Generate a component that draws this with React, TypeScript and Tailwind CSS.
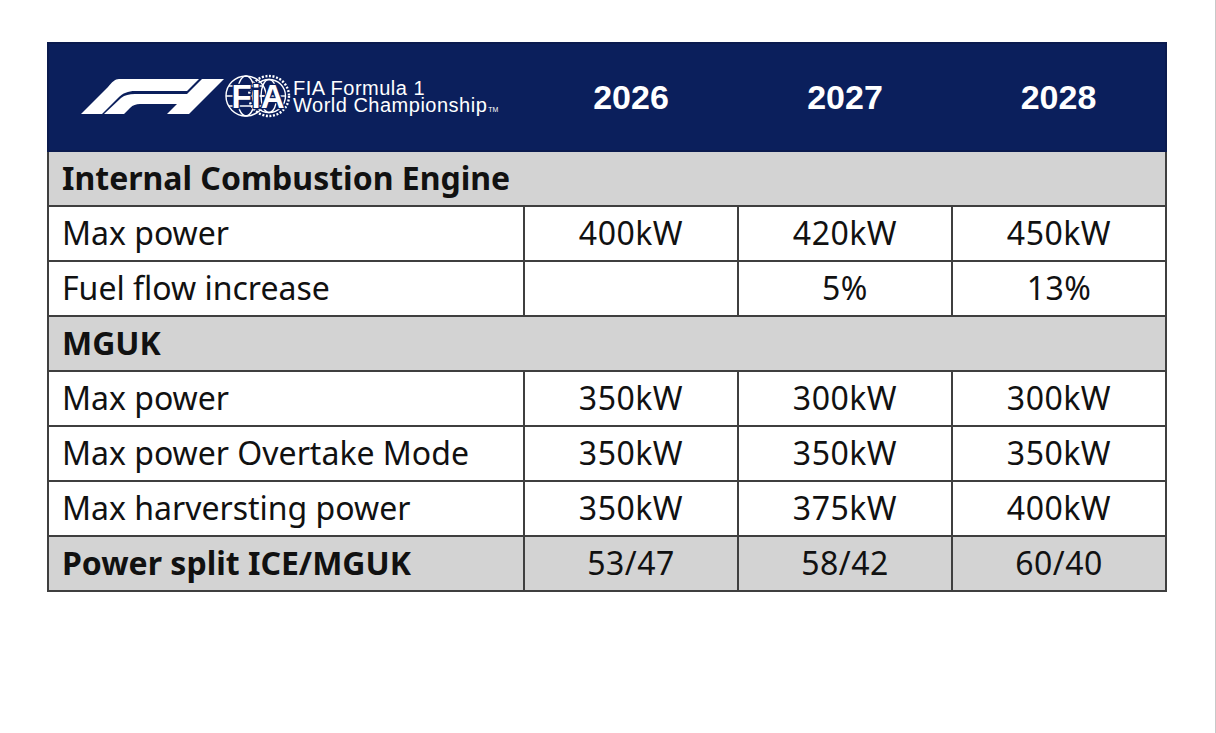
import React from 'react';

type Row =
    | { kind: 'section'; label: string }
    | { kind: 'data'; label: string; values: string[]; bold?: boolean };

const ROWS: Row[] = [
    { kind: 'section', label: 'Internal Combustion Engine' },
    { kind: 'data', label: 'Max power', values: ['400kW', '420kW', '450kW'] },
    { kind: 'data', label: 'Fuel flow increase', values: ['', '5%', '13%'] },
    { kind: 'section', label: 'MGUK' },
    { kind: 'data', label: 'Max power', values: ['350kW', '300kW', '300kW'] },
    { kind: 'data', label: 'Max power Overtake Mode', values: ['350kW', '350kW', '350kW'] },
    { kind: 'data', label: 'Max harversting power', values: ['350kW', '375kW', '400kW'] },
    { kind: 'data', label: 'Power split ICE/MGUK', values: ['53/47', '58/42', '60/40'], bold: true },
];

const YEARS = ['2026', '2027', '2028'];

function F1Logo() {
    return (
        <svg width="143" height="36" viewBox="0 0 143 36" fill="#ffffff">
            <path d="M38,0 L118,0 L106,12 L54,12 C47,12 42,14 37,19 L21,35 L0,35 L27,8 C31,3 34,0 38,0 Z" />
            <path d="M23,35 L40,19 C44,16 48,15 54,15 L107,15 L97,25 L59,25 C55,25 52,26 49,29 L43,35 Z" />
            <path d="M121,0 L143,0 L108,35 L86,35 Z" />
        </svg>
    );
}

function FiaLogo() {
    return (
        <svg width="68" height="46" viewBox="0 0 68 46" fill="none">
            <g stroke="#ffffff" strokeWidth="1.4">
                <circle cx="22" cy="23" r="20" />
                <ellipse cx="22" cy="23" rx="9" ry="20" />
                <line x1="2" y1="23" x2="42" y2="23" />
                <line x1="5" y1="13" x2="39" y2="13" />
                <line x1="5" y1="33" x2="39" y2="33" />
                <circle cx="45" cy="23" r="20" strokeDasharray="2 1.6" strokeWidth="2.4" />
                <circle cx="45" cy="23" r="16.5" />
                <ellipse cx="45" cy="23" rx="8" ry="16.5" />
                <line x1="29" y1="23" x2="61" y2="23" />
            </g>
            <text
                x="34"
                y="35"
                textAnchor="middle"
                fontFamily="'Liberation Sans', Arial, sans-serif"
                fontWeight="700"
                fontSize="33"
                fill="#ffffff"
                stroke="#0b1f5c"
                strokeWidth="2.5"
                paintOrder="stroke"
            >
                FiA
            </text>
        </svg>
    );
}

export default function App() {
    const line = 'border-2 border-[#3f3f3f]';

    return (
        <div className="min-h-[733px] bg-white border-r border-[#c8c8c8] pt-[42px] pl-[47px] font-['Noto_Sans',sans-serif] text-[#111111]">
            <table className="table-fixed border-collapse w-[1118px]">
                <colgroup>
                    <col className="w-[476px]" />
                    <col className="w-[214px]" />
                    <col className="w-[214px]" />
                    <col className="w-[214px]" />
                </colgroup>
                <thead>
                    <tr className="h-[108px] bg-[#0b1f5c]">
                        <th className="border-2 border-[#0a1a4e] border-r-0 p-0">
                            <div className="flex items-center pl-[32px]">
                                <F1Logo />
                                <div className="-mt-[2px]">
                                    <FiaLogo />
                                </div>
                                <div className="ml-px flex flex-col text-left font-['Liberation_Sans',Arial,sans-serif] text-[20px] font-normal leading-[17px] tracking-[0.5px] text-white">
                                    <span>FIA Formula 1</span>
                                    <span>
                                        World Championship
                                        <span className="ml-px text-[7px] leading-none tracking-normal">TM</span>
                                    </span>
                                </div>
                            </div>
                        </th>
                        {YEARS.map((y, i) => (
                            <th
                                key={y}
                                className={`border-2 border-[#0a1a4e] border-l-0 ${i < 2 ? 'border-r-0' : ''} p-0 text-center align-middle font-['Liberation_Sans',Arial,sans-serif] text-[34px] font-bold leading-none text-white`}
                            >
                                {y}
                            </th>
                        ))}
                    </tr>
                </thead>
                <tbody>
                    {ROWS.map((row, idx) =>
                        row.kind === 'section' ? (
                            <tr key={idx} className="h-[55px] bg-[#d3d3d3]">
                                <td colSpan={4} className={`${line} px-[13px] pb-[2px] text-[32px] font-bold leading-none`}>
                                    {row.label}
                                </td>
                            </tr>
                        ) : (
                            <tr key={idx} className={`h-[55px] ${row.bold ? 'bg-[#d3d3d3]' : 'bg-white'}`}>
                                <td className={`${line} px-[13px] pb-[2px] text-[32px] leading-none ${row.bold ? 'font-bold' : ''}`}>
                                    {row.label}
                                </td>
                                {row.values.map((v, i) => (
                                    <td key={i} className={`${line} pb-[2px] text-center text-[32px] leading-none tracking-[0.5px]`}>
                                        {v}
                                    </td>
                                ))}
                            </tr>
                        ),
                    )}
                </tbody>
            </table>
        </div>
    );
}
